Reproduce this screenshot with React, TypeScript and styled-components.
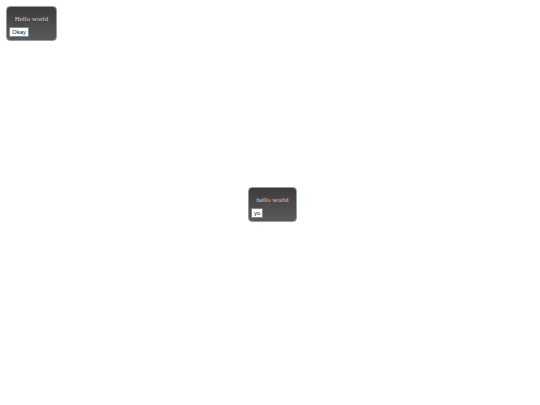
import React from "react";
import styled, { createGlobalStyle } from "styled-components";

const GlobalStyle = createGlobalStyle`
  html, body {
    margin: 0;
    padding: 0;
    background: #fff;
  }
  #root {
    position: relative;
    width: 540px;
    height: 405px;
  }
`;

// floating message windows, placed where they sit on the page
const Dialog = styled.div<{ $left: number; $top: number; $width: number }>`
  position: absolute;
  left: ${(p) => p.$left}px;
  top: ${(p) => p.$top}px;
  width: ${(p) => p.$width}px;
  height: 35px;
  box-sizing: border-box;
  display: flex;
  flex-direction: column;
  justify-content: space-between;
  padding: 8px 2px 3px 2px;
  background: linear-gradient(to bottom, #3c3c3c, #5a5a5a);
  border: 1px solid #9a9a9a;
  border-radius: 4px;
`;

const Message = styled.div`
  font-family: "Liberation Serif", "Times New Roman", serif;
  font-size: 7px;
  color: #d4d4d4;
  text-align: center;
  line-height: 9px;
`;

const Button = styled.button`
  align-self: flex-start;
  font-family: "Liberation Sans", Arial, sans-serif;
  font-size: 6px;
  line-height: 6px;
  color: #111;
  background: #fff;
  border: 1px solid #888;
  border-radius: 1px;
  padding: 1px 2px;
  margin: 0;
`;

const App = () => (
  <>
    <GlobalStyle />
    <Dialog $left={6} $top={6} $width={51}>
      <Message>Hello world</Message>
      <Button>Okay</Button>
    </Dialog>
    <Dialog $left={248} $top={187} $width={49}>
      <Message>hello world</Message>
      <Button>yo</Button>
    </Dialog>
  </>
);

export default App;
